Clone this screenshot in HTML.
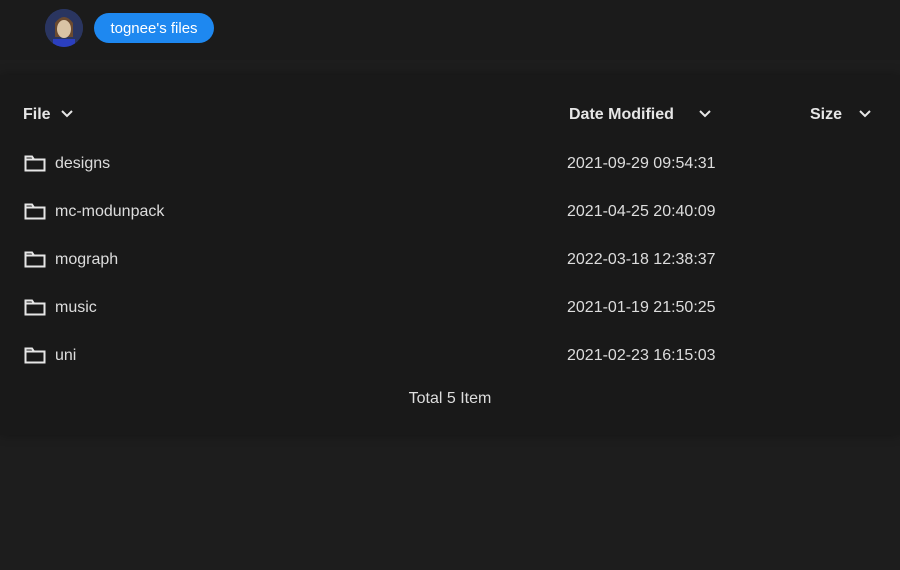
<!DOCTYPE html>
<html><head><style>
body{margin:0;width:900px;height:570px;background:#1d1d1d;font-family:"Liberation Sans",sans-serif;color:#ddd;overflow:hidden;position:relative}
.hdr{position:absolute;left:0;top:0;width:900px;height:60px;background:#1b1b1b}
.av{position:absolute;left:45px;top:9px;width:38px;height:38px;border-radius:50%;background:#2a3a6a;overflow:hidden}
.pill{position:absolute;left:94px;top:13px;width:120px;height:30px;border-radius:15px;background:#1e88f0;color:#fff;font-size:15px;line-height:31px;text-align:center}
.panel{position:absolute;left:0;top:75px;width:900px;height:360px;background:#191919;box-shadow:0 0 10px rgba(0,0,0,.3)}
.h{position:absolute;top:106px;font-size:16px;font-weight:bold;color:#e6e6e6}
.chev{position:absolute;top:110px}
.row{position:absolute;left:0;width:900px;font-size:16px;color:#ddd}
.row svg{position:absolute;left:24px;top:0px}
.row .n{position:absolute;left:55px;top:1px}
.row .d{position:absolute;left:567px;top:1px}
.tot{position:absolute;top:390px;width:900px;text-align:center;font-size:16px;color:#ddd}
</style></head><body>
<div class="hdr"></div>
<div class="av"><svg width="38" height="38"><rect width="38" height="38" fill="#2a3560"/><path d="M10 14 Q19 2 28 14 L28 28 L10 28Z" fill="#6b4a30"/><ellipse cx="19" cy="20" rx="7" ry="9" fill="#d9c3a5"/><rect x="8" y="30" width="22" height="10" fill="#2b3fbf"/></svg></div>
<div class="pill">tognee's files</div>
<div class="panel"></div>
<div class="h" style="left:23px">File</div>
<svg class="chev" style="left:61px" width="12" height="8"><path d="M1 1l5 5 5-5" stroke="#e6e6e6" stroke-width="2" fill="none"/></svg>
<div class="h" style="left:569px">Date Modified</div>
<svg class="chev" style="left:699px" width="12" height="8"><path d="M1 1l5 5 5-5" stroke="#e6e6e6" stroke-width="2" fill="none"/></svg>
<div class="h" style="left:810px">Size</div>
<svg class="chev" style="left:859px" width="12" height="8"><path d="M1 1l5 5 5-5" stroke="#e6e6e6" stroke-width="2" fill="none"/></svg>

<div class="row" style="top:154px"><svg width="22" height="18"><path d="M1.5 3.5V16.5H20.5V5.5H10L8 2.5H1.5Z M1.5 5.5H10" stroke="#e6e6e6" stroke-width="2" fill="none"/></svg><span class="n">designs</span><span class="d">2021-09-29 09:54:31</span></div>
<div class="row" style="top:202px"><svg width="22" height="18"><path d="M1.5 3.5V16.5H20.5V5.5H10L8 2.5H1.5Z M1.5 5.5H10" stroke="#e6e6e6" stroke-width="2" fill="none"/></svg><span class="n">mc-modunpack</span><span class="d">2021-04-25 20:40:09</span></div>
<div class="row" style="top:250px"><svg width="22" height="18"><path d="M1.5 3.5V16.5H20.5V5.5H10L8 2.5H1.5Z M1.5 5.5H10" stroke="#e6e6e6" stroke-width="2" fill="none"/></svg><span class="n">mograph</span><span class="d">2022-03-18 12:38:37</span></div>
<div class="row" style="top:298px"><svg width="22" height="18"><path d="M1.5 3.5V16.5H20.5V5.5H10L8 2.5H1.5Z M1.5 5.5H10" stroke="#e6e6e6" stroke-width="2" fill="none"/></svg><span class="n">music</span><span class="d">2021-01-19 21:50:25</span></div>
<div class="row" style="top:346px"><svg width="22" height="18"><path d="M1.5 3.5V16.5H20.5V5.5H10L8 2.5H1.5Z M1.5 5.5H10" stroke="#e6e6e6" stroke-width="2" fill="none"/></svg><span class="n">uni</span><span class="d">2021-02-23 16:15:03</span></div>
<div class="tot">Total 5 Item</div>
</body></html>
